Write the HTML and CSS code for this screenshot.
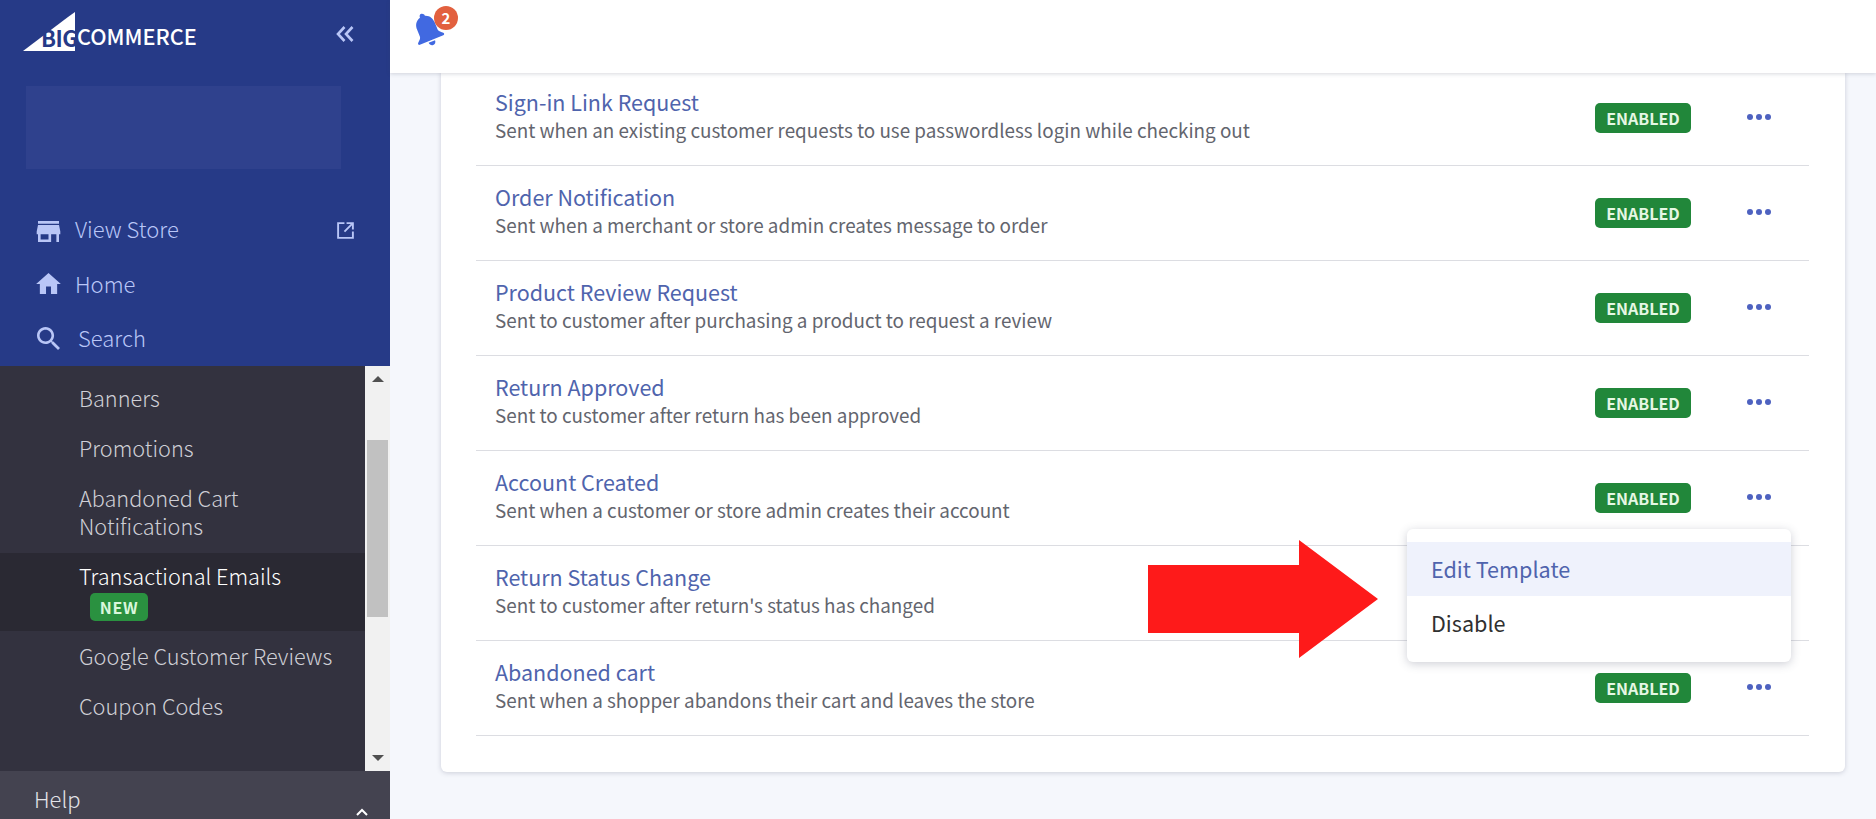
FILE: index.html
```html
<!DOCTYPE html>
<html lang="en">
<head>
  <meta charset="UTF-8" />
  <title>Transactional Emails</title>
  <link rel="stylesheet" href="styles.css">
</head>
<body>
  <div class="app">
    <aside class="sidebar">
      <div class="side-top">
        <div class="logo-row">
          <div class="logo">
            <svg class="logo-mark" viewBox="0 0 52 39" width="52" height="39"><path d="M0 39 L45 5 L52 0 V39 Z" fill="#fff"/></svg>
            <span class="logo-big">BIG</span><span class="logo-commerce">COMMERCE</span>
          </div>
          <svg class="collapse" viewBox="0 0 18 16" width="18" height="16"><path d="M8.500 1 L2 8 L8.500 15 M16.500 1 L10 8 L16.500 15" fill="none" stroke="#b9c6f7" stroke-width="2.600"/></svg>
        </div>
        <div class="store-box"></div>
        <nav class="top-nav">
          <a class="top-link">
            <svg class="nav-icon store-icon" viewBox="3 4 18 16" width="24" height="21"><path d="M20 4H4v2h16V4zm1 10v-2l-1-5H4l-1 5v2h1v6h10v-6h4v6h2v-6h1zm-9 4H6v-4h6v4z" fill="#b9c6f7"/></svg>
            <span class="nav-text">View Store</span>
            <svg class="ext-icon" viewBox="0 0 18 18" width="19" height="19"><path d="M8 2H2v14h14v-6M10 2h6v6M16 2L8 10" fill="none" stroke="#b9c6f7" stroke-width="1.800"/></svg>
          </a>
          <a class="top-link">
            <svg class="nav-icon" viewBox="2 3 20 17" width="25" height="21"><path d="M10 20v-6h4v6h5v-8h3L12 3 2 12h3v8z" fill="#b9c6f7"/></svg>
            <span class="nav-text">Home</span>
          </a>
          <a class="top-link">
            <svg class="nav-icon" viewBox="3 3 17.500 17.500" width="23" height="23"><path d="M15.500 14h-.79l-.28-.27C15.410 12.590 16 11.110 16 9.500 16 5.910 13.090 3 9.500 3S3 5.910 3 9.500 5.910 16 9.500 16c1.610 0 3.090-.59 4.230-1.570l.27.28v.79l5 4.990L20.490 19l-4.990-5zm-6 0C7.010 14 5 11.990 5 9.500S7.010 5 9.500 5 14 7.010 14 9.500 11.990 14 9.500 14z" fill="#b9c6f7"/></svg>
            <span class="nav-text nav-text-search">Search</span>
          </a>
        </nav>
      </div>
      <div class="side-scroll">
        <ul class="sub-nav">
          <li class="sub-item">Banners</li>
          <li class="sub-item">Promotions</li>
          <li class="sub-item sub-item-tall">Abandoned Cart<br>Notifications</li>
          <li class="sub-item active">Transactional Emails<span class="new-badge">NEW</span></li>
          <li class="sub-item">Google Customer Reviews</li>
          <li class="sub-item">Coupon Codes</li>
        </ul>
        <div class="scrollbar">
          <span class="arrow-up"></span>
          <span class="thumb"></span>
          <span class="arrow-down"></span>
        </div>
      </div>
      <div class="side-help">
        <span>Help</span>
        <svg class="help-chevron" viewBox="0 0 12 8" width="12" height="8"><path d="M1 7 L6 2 L11 7" fill="none" stroke="#fff" stroke-width="2"/></svg>
      </div>
    </aside>

    <main class="main">
      <header class="topbar">
        <div class="bell">
          <svg class="bell-icon" viewBox="0 0 26 30" width="30" height="35"><path d="M13 .5c1.600 0 2.800 1.200 2.800 2.700 4 1.300 5.700 4.700 5.700 8.800v6.500c0 1.400 1.500 2.600 3.500 4.500.8.8.3 2-.8 2H2.300c-1.100 0-1.600-1.200-.8-2 2-1.900 3.500-3.100 3.500-4.500V12c0-4.100 1.700-7.500 6.200-8.800 0-1.500.8-2.700 1.800-2.700z M10 26.200h6c0 1.900-1.300 3.300-3 3.300s-3-1.400-3-3.300z" fill="#4169e1"/></svg>
          <span class="bell-count">2</span>
        </div>
      </header>
      <div class="content">
        <section class="card">
          <div class="email-row">
            <div class="email-info">
              <a class="email-title">Sign-in Link Request</a>
              <p class="email-desc">Sent when an existing customer requests to use passwordless login while checking out</p>
            </div>
            <span class="status">ENABLED</span>
            <span class="more"><i></i><i></i><i></i></span>
          </div>
          <div class="email-row">
            <div class="email-info">
              <a class="email-title">Order Notification</a>
              <p class="email-desc">Sent when a merchant or store admin creates message to order</p>
            </div>
            <span class="status">ENABLED</span>
            <span class="more"><i></i><i></i><i></i></span>
          </div>
          <div class="email-row">
            <div class="email-info">
              <a class="email-title">Product Review Request</a>
              <p class="email-desc">Sent to customer after purchasing a product to request a review</p>
            </div>
            <span class="status">ENABLED</span>
            <span class="more"><i></i><i></i><i></i></span>
          </div>
          <div class="email-row">
            <div class="email-info">
              <a class="email-title">Return Approved</a>
              <p class="email-desc">Sent to customer after return has been approved</p>
            </div>
            <span class="status">ENABLED</span>
            <span class="more"><i></i><i></i><i></i></span>
          </div>
          <div class="email-row">
            <div class="email-info">
              <a class="email-title">Account Created</a>
              <p class="email-desc">Sent when a customer or store admin creates their account</p>
            </div>
            <span class="status">ENABLED</span>
            <span class="more"><i></i><i></i><i></i>
              <div class="menu">
                <div class="menu-item hover">Edit Template</div>
                <div class="menu-item">Disable</div>
              </div>
            </span>
          </div>
          <div class="email-row">
            <div class="email-info">
              <a class="email-title">Return Status Change</a>
              <p class="email-desc">Sent to customer after return's status has changed</p>
            </div>
            <span class="status">ENABLED</span>
            <span class="more"><i></i><i></i><i></i></span>
          </div>
          <div class="email-row">
            <div class="email-info">
              <a class="email-title">Abandoned cart</a>
              <p class="email-desc">Sent when a shopper abandons their cart and leaves the store</p>
            </div>
            <span class="status">ENABLED</span>
            <span class="more"><i></i><i></i><i></i></span>
          </div>
          <svg class="callout" viewBox="0 0 230 118" width="230" height="118"><path d="M0 25 H151 V0 L230 59 L151 118 V93 H0 Z" fill="#fe1a1a"/></svg>
        </section>
      </div>
    </main>
  </div>
</body>
</html>
```

FILE: styles.css
```css
:root {
  --navy: #263a87;
  --link: #4f64ad;
  --muted: #63656e;
  --line: #dcdde2;
  --green: #21873a;
}
* { box-sizing: border-box; margin: 0; padding: 0; }
html, body { height: 100%; overflow: hidden; }
body {
  font-family: "Noto Sans CJK SC", "Noto Sans", sans-serif;
  background: #f5f7fc;
}
.app { display: flex; height: 819px; }

/* sidebar */
.sidebar {
  width: 390px;
  flex: none;
  display: flex;
  flex-direction: column;
  background: var(--navy);
}
.side-top { height: 366px; flex: none; }
.logo-row {
  display: flex;
  justify-content: space-between;
  align-items: flex-start;
  padding: 12px 36px 0 23px;
  height: 86px;
}
.logo { position: relative; width: 175px; height: 39px; }
.logo-mark { position: absolute; left: 0; top: 0; }
.logo-big {
  position: absolute;
  left: 18px;
  top: 12px;
  font-size: 22px;
  line-height: 26px;
  font-weight: 700;
  color: var(--navy);
  letter-spacing: -0.5px;
}
.logo-commerce {
  position: absolute;
  left: 54px;
  top: 11px;
  font-size: 21.700px;
  line-height: 26px;
  font-weight: 500;
  color: #fff;
}
.collapse { margin-top: 14px; }
.store-box {
  width: 315px;
  height: 83px;
  margin-left: 26px;
  background: #2f418d;
}
.top-nav { padding-top: 33px; }
.top-link {
  display: flex;
  align-items: center;
  height: 54.500px;
  padding: 0 36px;
  color: #b9c6f7;
}
.nav-icon { flex: none; width: 25px; }
.store-icon { margin-top: 4px; }
.nav-text { margin-left: 14px; margin-bottom: 2px; font-size: 22px; line-height: 28px; font-weight: 300; }
.nav-text-search { margin-left: 17px; }
.ext-icon { margin-left: auto; margin-top: 3px; margin-right: -1px; }

.side-scroll { height: 405px; flex: none; display: flex; background: #33323f; }
.sub-nav { flex: 1; list-style: none; padding-top: 7px; }
.sub-item {
  padding: 11px 16px 11px 79px;
  font-size: 21.700px;
  line-height: 28px;
  font-weight: 300;
  color: #cfcfd6;
}
.sub-item-tall { padding-bottom: 13px; }
.sub-item.active {
  height: 78px;
  padding-top: 9px;
  background: #2a2933;
  color: #fff;
}
.new-badge {
  display: block;
  margin: 3px 0 0 11px;
  width: 58px;
  height: 28px;
  border-radius: 5px;
  background: #2a9140;
  color: #d9f7dc;
  font-size: 16px;
  line-height: 28px;
  font-weight: 700;
  text-align: center;
  letter-spacing: 0.6px;
}
.scrollbar {
  width: 25px;
  flex: none;
  display: flex;
  flex-direction: column;
  align-items: center;
  background: #f1f1f1;
}
.arrow-up, .arrow-down { width: 0; height: 0; border-left: 6px solid transparent; border-right: 6px solid transparent; }
.arrow-up { border-bottom: 6px solid #505050; margin-top: 10px; }
.arrow-down { border-top: 6px solid #505050; margin-top: auto; margin-bottom: 10px; }
.thumb { width: 21px; height: 177px; margin-top: 58px; background: #c1c1c1; }

.side-help {
  flex: 1;
  position: relative;
  background: #444350;
  padding: 13px 34px;
  font-size: 22px;
  line-height: 28px;
  font-weight: 300;
  color: #e3e3e8;
}
.help-chevron { position: absolute; right: 22px; top: 37px; }

/* main */
.main { flex: 1; min-width: 0; display: flex; flex-direction: column; }
.topbar {
  height: 73px;
  flex: none;
  position: relative;
  z-index: 2;
  background: #fff;
  box-shadow: 0 1px 4px rgba(60,64,90,0.2);
  padding: 10px 0 0 24px;
}
.bell { position: relative; width: 50px; height: 40px; }
.bell-icon { position: absolute; left: -2px; top: 2px; transform: rotate(-22deg); }
.bell-count {
  position: absolute;
  left: 20px;
  top: -4px;
  width: 24px;
  height: 24px;
  border-radius: 50%;
  background: #e2603f;
  color: #fff;
  font-size: 15px;
  line-height: 24px;
  font-weight: 700;
  text-align: center;
}
.content { padding: 0 31px 0 51px; margin-top: -2px; }
.card {
  position: relative;
  height: 701px;
  padding: 0 36px 0 35px;
  background: #fff;
  border-radius: 0 0 6px 6px;
  box-shadow: 0 1px 5px rgba(60,64,90,0.22);
}
.email-row {
  display: flex;
  align-items: center;
  height: 95px;
  padding: 0 38px 4px 19px;
  border-bottom: 1px solid var(--line);
}
.email-info { flex: 1; min-width: 0; }
.email-title { display: block; font-size: 21.500px; line-height: 28px; color: var(--link); }
.email-desc { font-size: 18.850px; line-height: 28px; color: var(--muted); }
.status {
  width: 96px;
  height: 30px;
  margin-top: 3px;
  border-radius: 5px;
  background: var(--green);
  color: #e6f7e4;
  font-size: 16px;
  line-height: 30px;
  font-weight: 700;
  text-align: center;
}
.more {
  position: relative;
  display: flex;
  gap: 3px;
  width: 24px;
  margin-left: 56px;
  margin-top: 2px;
}
.more i { width: 6px; height: 6px; border-radius: 50%; background: #4e62c0; }
.menu {
  position: absolute;
  z-index: 3;
  top: 35px;
  right: -20px;
  width: 384px;
  padding: 13px 0 12px;
  background: #fff;
  border-radius: 6px;
  box-shadow: 0 2px 10px rgba(60,64,90,0.25);
}
.menu-item { height: 54px; padding: 0 24px; font-size: 21.600px; line-height: 54px; color: #303030; }
.menu-item.hover { background: #eff2fc; color: var(--link); }
.callout { position: absolute; z-index: 2; left: 707px; top: 469px; }
```
